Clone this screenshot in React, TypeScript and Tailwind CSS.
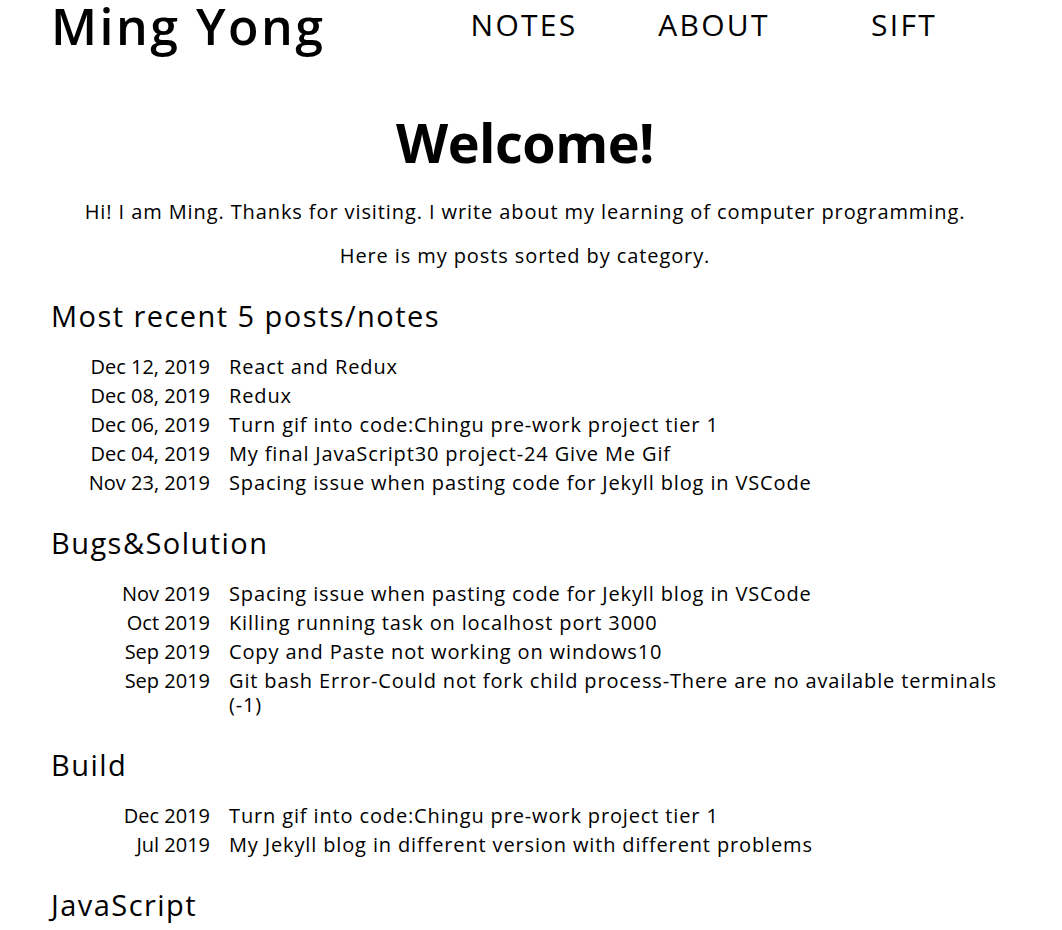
import React from "react";

const recent = [
  ["Dec 12, 2019", "React and Redux"],
  ["Dec 08, 2019", "Redux"],
  ["Dec 06, 2019", "Turn gif into code:Chingu pre-work project tier 1"],
  ["Dec 04, 2019", "My final JavaScript30 project-24 Give Me Gif"],
  ["Nov 23, 2019", "Spacing issue when pasting code for Jekyll blog in VSCode"],
];

const bugs = [
  ["Nov 2019", "Spacing issue when pasting code for Jekyll blog in VSCode"],
  ["Oct 2019", "Killing running task on localhost port 3000"],
  ["Sep 2019", "Copy and Paste not working on windows10"],
  ["Sep 2019", "Git bash Error-Could not fork child process-There are no available terminals (-1)"],
];

const build = [
  ["Dec 2019", "Turn gif into code:Chingu pre-work project tier 1"],
  ["Jul 2019", "My Jekyll blog in different version with different problems"],
];

function Section({ title, rows }: { title: string; rows: string[][] }) {
  return (
    <section className="mt-[30px]">
      <h2 className="text-[29px] leading-[35px] font-normal tracking-[0.05em]">{title}</h2>
      <div className="mt-[22px] flex flex-col gap-[5px]">
        {rows.map(([d, t], i) => (
          <div key={i} className="grid grid-cols-[159px_1fr] gap-x-[19px] text-[20px] leading-[24px]">
            <span className="text-right tracking-[0em]">{d}</span>
            <span className="tracking-[0.043em]">{t}</span>
          </div>
        ))}
      </div>
    </section>
  );
}

export default function App() {
  return (
    <div className="min-h-[930px] bg-white text-black" style={{ fontFamily: '"Open Sans", sans-serif' }}>
      <div className="mx-auto w-[960px]">
        <header className="flex items-start pr-[12px]">
          <h1 className="-mt-[8px] text-[50px] leading-[68px] font-semibold tracking-[0.05em]">Ming Yong</h1>
          <nav className="ml-auto mt-[10px] flex text-[30px] leading-[30px] tracking-[0.075em]">
            <span className="w-[190px] text-center">NOTES</span>
            <span className="w-[190px] text-center">ABOUT</span>
            <span className="w-[190px] text-center">SIFT</span>
          </nav>
        </header>
        <div className="pr-[12px]">
          <h1 className="mt-[55px] text-center text-[54px] leading-[54px] font-bold tracking-[-0.01em]">Welcome!</h1>
          <p className="mt-[31px] text-center text-[20px] leading-[24px] tracking-[0.045em]">
            Hi! I am Ming. Thanks for visiting. I write about my learning of computer programming.
          </p>
          <p className="mt-[20px] text-center text-[20px] leading-[24px] tracking-[0.045em]">
            Here is my posts sorted by category.
          </p>
        </div>
        <Section title="Most recent 5 posts/notes" rows={recent} />
        <Section title="Bugs&Solution" rows={bugs} />
        <Section title="Build" rows={build} />
        <section className="mt-[30px]">
          <h2 className="text-[29px] leading-[35px] font-normal tracking-[0.05em]">JavaScript</h2>
        </section>
      </div>
    </div>
  );
}
